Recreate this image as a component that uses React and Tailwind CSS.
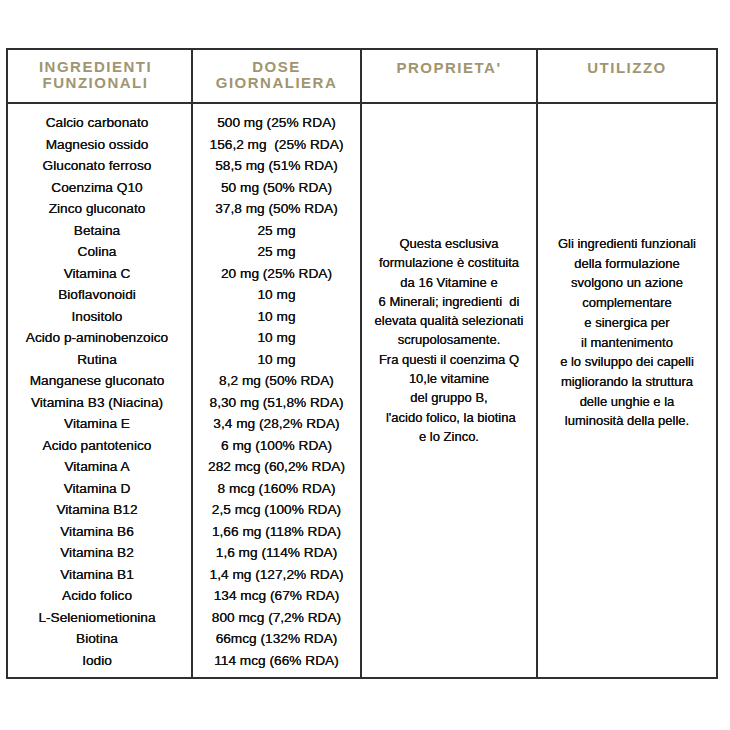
import React from 'react';

const rows = [
    ['Calcio carbonato', '500 mg (25% RDA)'],
    ['Magnesio ossido', '156,2 mg  (25% RDA)'],
    ['Gluconato ferroso', '58,5 mg (51% RDA)'],
    ['Coenzima Q10', '50 mg (50% RDA)'],
    ['Zinco gluconato', '37,8 mg (50% RDA)'],
    ['Betaina', '25 mg'],
    ['Colina', '25 mg'],
    ['Vitamina C', '20 mg (25% RDA)'],
    ['Bioflavonoidi', '10 mg'],
    ['Inositolo', '10 mg'],
    ['Acido p-aminobenzoico', '10 mg'],
    ['Rutina', '10 mg'],
    ['Manganese gluconato', '8,2 mg (50% RDA)'],
    ['Vitamina B3 (Niacina)', '8,30 mg (51,8% RDA)'],
    ['Vitamina E', '3,4 mg (28,2% RDA)'],
    ['Acido pantotenico', '6 mg (100% RDA)'],
    ['Vitamina A', '282 mcg (60,2% RDA)'],
    ['Vitamina D', '8 mcg (160% RDA)'],
    ['Vitamina B12', '2,5 mcg (100% RDA)'],
    ['Vitamina B6', '1,66 mg (118% RDA)'],
    ['Vitamina B2', '1,6 mg (114% RDA)'],
    ['Vitamina B1', '1,4 mg (127,2% RDA)'],
    ['Acido folico', '134 mcg (67% RDA)'],
    ['L-Seleniometionina', '800 mcg (7,2% RDA)'],
    ['Biotina', '66mcg (132% RDA)'],
    ['Iodio', '114 mcg (66% RDA)'],
];

const proprieta = [
    'Questa esclusiva',
    'formulazione è costituita',
    'da 16 Vitamine e',
    '6 Minerali; ingredienti  di',
    'elevata qualità selezionati',
    'scrupolosamente.',
    'Fra questi il coenzima Q',
    '10,le vitamine',
    'del gruppo B,',
    " l'acido folico, la biotina",
    'e lo Zinco.',
];

const utilizzo = [
    'Gli ingredienti funzionali',
    'della formulazione',
    'svolgono un azione',
    'complementare',
    'e sinergica per',
    'il mantenimento',
    'e lo sviluppo dei capelli',
    'migliorando la struttura',
    'delle unghie e la',
    'luminosità della pelle.',
];

const head = "text-center text-[15px] leading-[16px] font-bold tracking-[1.5px] text-[#a09570]";
// leggero ispessimento per avvicinare il peso del font originale
const body = "text-center whitespace-pre text-[#161616] [text-shadow:0_0_0.3px_#000]";

export default function App() {
    return (
        <div className="w-[730px] h-[730px] bg-white pt-[48px] pl-[6px]" style={{ fontFamily: '"Liberation Sans", Arial, sans-serif' }}>
            <div className="w-[712px] border-2 border-[#2f2f2f]">
                {/* intestazione */}
                <div className="flex h-[54px] border-b-2 border-[#2f2f2f]">
                    <div className={`w-[185px] border-r-2 border-[#2f2f2f] pt-[9px] pr-[8px] ${head}`}>INGREDIENTI<br />FUNZIONALI</div>
                    <div className={`w-[169px] border-r-2 border-[#2f2f2f] pt-[9px] ${head}`}>DOSE<br />GIORNALIERA</div>
                    <div className={`w-[176px] border-r-2 border-[#2f2f2f] pt-[10px] ${head}`}>PROPRIETA'</div>
                    <div className={`w-[178px] pt-[10px] ${head}`}>UTILIZZO</div>
                </div>

                <div className="flex h-[573px]">
                    <div className={`w-[185px] border-r-2 border-[#2f2f2f] pt-[8px] pr-[5px] text-[13.7px] leading-[21.5px] ${body}`}>
                        {rows.map(([name]) => <div key={name}>{name}</div>)}
                    </div>
                    <div className={`w-[169px] border-r-2 border-[#2f2f2f] pt-[8px] text-[13.7px] leading-[21.5px] ${body}`}>
                        {rows.map(([name, dose]) => <div key={name}>{dose}</div>)}
                    </div>
                    <div className={`w-[176px] border-r-2 border-[#2f2f2f] pt-[130px] text-[13px] leading-[19.3px] ${body}`}>
                        {proprieta.map((l) => <div key={l}>{l}</div>)}
                    </div>
                    <div className={`w-[178px] pt-[130px] text-[13px] leading-[19.7px] ${body}`}>
                        {utilizzo.map((l) => <div key={l}>{l}</div>)}
                    </div>
                </div>
            </div>
        </div>
    );
}
